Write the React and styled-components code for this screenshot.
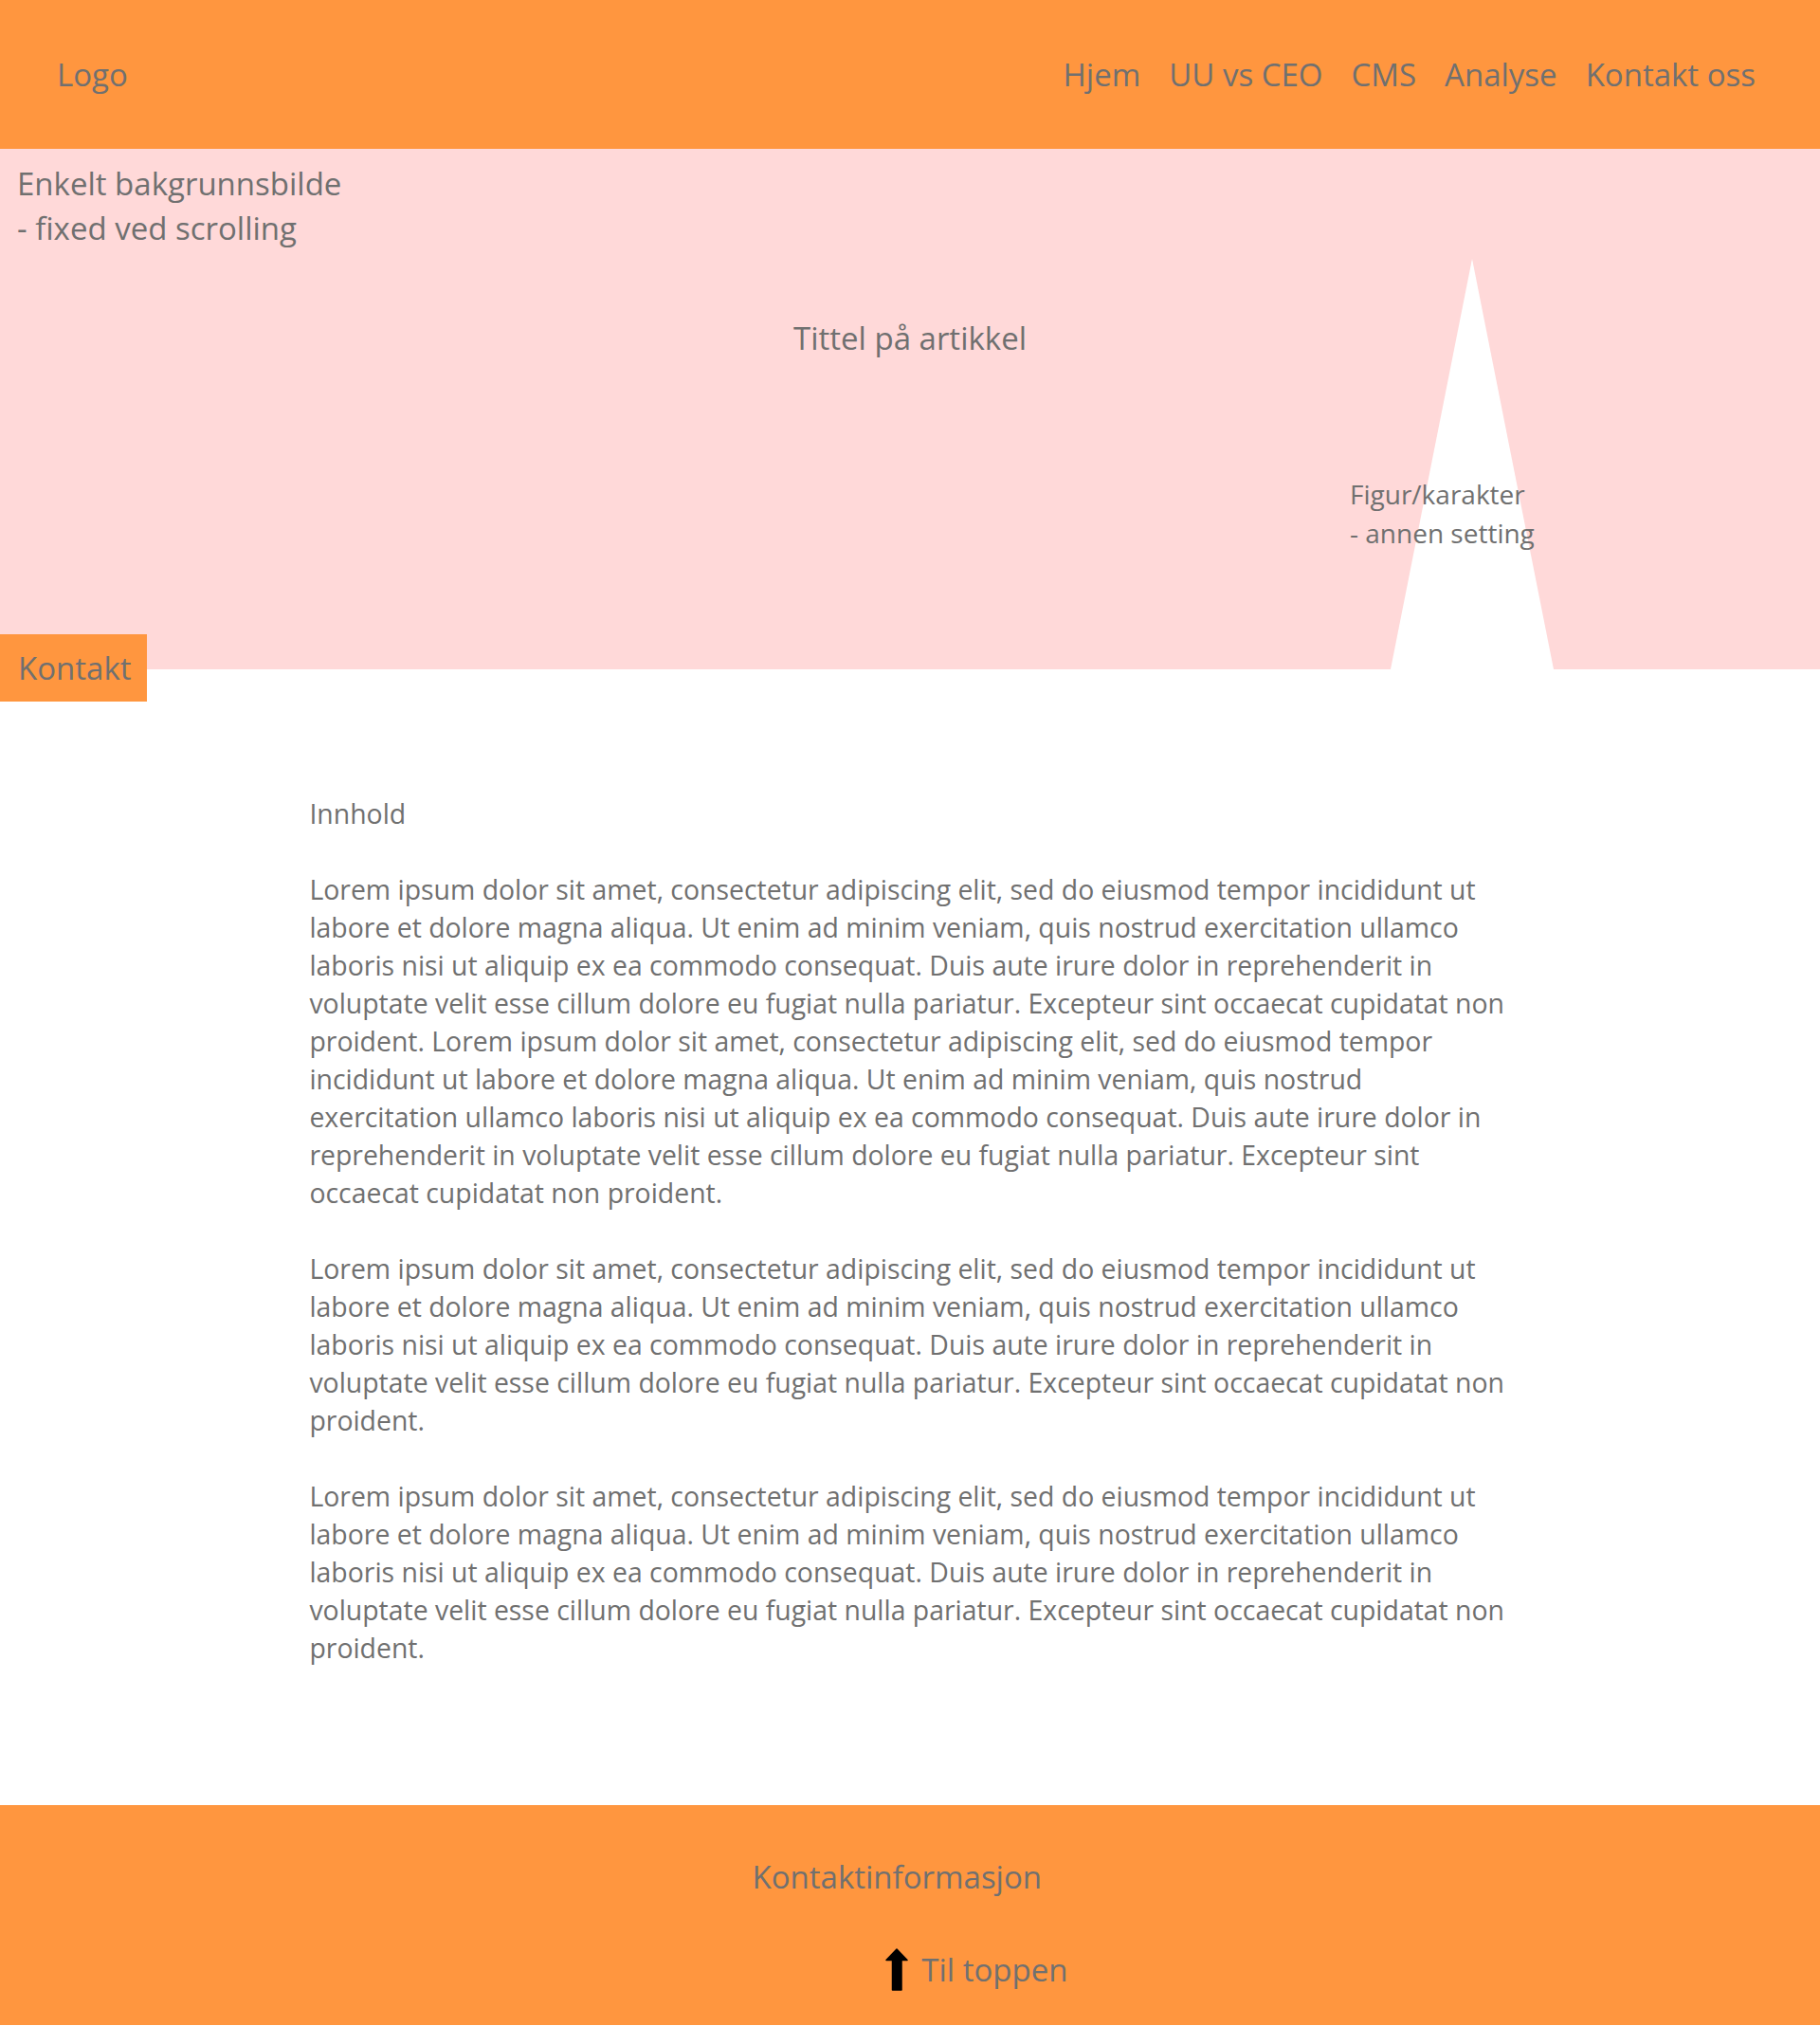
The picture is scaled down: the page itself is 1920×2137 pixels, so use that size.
import React from 'react';
import styled, { createGlobalStyle } from 'styled-components';

const orange = '#ff963f';
const pink = '#ffd9d9';
const grey = '#707070';

const GlobalStyle = createGlobalStyle`
  body {
    margin: 0;
    font-family: "Segoe UI", "Open Sans", "Noto Sans", sans-serif;
    color: ${grey};
    background: #fff;
  }
`;

const Header = styled.header`
  display: flex;
  justify-content: space-between;
  align-items: center;
  height: 157px;
  padding: 0 68px 0 60px;
  box-sizing: border-box;
  background: ${orange};
  font-size: 33px;
`;

const Logo = styled.div``;

const Nav = styled.nav`
  display: flex;
  gap: 30px;
`;

const NavLink = styled.a`
  color: ${grey};
  text-decoration: none;
`;

const Hero = styled.section`
  position: relative;
  height: 549px;
  padding: 13px 18px 0;
  box-sizing: border-box;
  background: ${pink};
  font-size: 33px;
  line-height: 47px;
`;

const Note = styled.div``;

const Title = styled.h1`
  margin: 69px 0 0;
  font-size: 33px;
  font-weight: normal;
  text-align: center;
`;

// the triangle stands for the character figure on the background
const Figure = styled.div`
  position: absolute;
  left: 1467px;
  top: 116px;
  width: 172px;
  bottom: 0;
  background: #fff;
  clip-path: polygon(50% 0, 100% 100%, 0 100%);
`;

const FigureLabel = styled.div`
  position: absolute;
  left: 1424px;
  top: 344px;
  font-size: 28px;
  line-height: 41px;
`;

const ContactTab = styled.a`
  position: absolute;
  left: 0;
  top: 512px;
  width: 155px;
  height: 71px;
  display: flex;
  align-items: center;
  padding-left: 19px;
  box-sizing: border-box;
  background: ${orange};
  color: ${grey};
  text-decoration: none;
  font-size: 33px;
  z-index: 2;
`;

const Main = styled.main`
  width: 66%;
  margin: 0 auto;
  padding: 132px 0 146px;
  font-size: 28.4px;
  line-height: 40px;
`;

const Paragraph = styled.p`
  margin: 0 0 40px;

  &:last-child {
    margin-bottom: 0;
  }
`;

const Footer = styled.footer`
  display: flex;
  justify-content: center;
  height: 232px;
  padding-top: 52px;
  box-sizing: border-box;
  background: ${orange};
  font-size: 33px;
  line-height: 47px;
`;

const FooterInner = styled.div`
  display: flex;
  flex-direction: column;
  width: 333px;
  gap: 51px;
`;

const ToTop = styled.a`
  display: flex;
  align-items: center;
  align-self: flex-end;
  gap: 14px;
  color: ${grey};
  text-decoration: none;
`;

const ArrowUp = () => (
  <svg width="24" height="46" viewBox="0 0 24 46">
    <path
      d="M12 1 L23 12.5 L17 12.5 L17 44 L7.5 44 L7.5 12.5 L1 12.5 Z"
      fill="#000"
      stroke="#000"
      strokeWidth="1.5"
      strokeLinejoin="round"
    />
  </svg>
);

const lorem =
  'Lorem ipsum dolor sit amet, consectetur adipiscing elit, sed do eiusmod tempor incididunt ut labore et dolore magna aliqua. Ut enim ad minim veniam, quis nostrud exercitation ullamco laboris nisi ut aliquip ex ea commodo consequat. Duis aute irure dolor in reprehenderit in voluptate velit esse cillum dolore eu fugiat nulla pariatur. Excepteur sint occaecat cupidatat non proident.';

const navItems = ['Hjem', 'UU vs CEO', 'CMS', 'Analyse', 'Kontakt oss'];

export default function App() {
  return (
    <>
      <GlobalStyle />
      <Header>
        <Logo>Logo</Logo>
        <Nav>
          {navItems.map((item) => (
            <NavLink key={item} href="#">
              {item}
            </NavLink>
          ))}
        </Nav>
      </Header>

      <Hero>
        <Note>
          Enkelt bakgrunnsbilde
          <br />- fixed ved scrolling
        </Note>
        <Title>Tittel på artikkel</Title>
        <Figure />
        <FigureLabel>
          Figur/karakter
          <br />- annen setting
        </FigureLabel>
        <ContactTab href="#">Kontakt</ContactTab>
      </Hero>

      <Main>
        <Paragraph>Innhold</Paragraph>
        <Paragraph>{`${lorem} ${lorem}`}</Paragraph>
        <Paragraph>{lorem}</Paragraph>
        <Paragraph>{lorem}</Paragraph>
      </Main>

      <Footer>
        <FooterInner>
          <div>Kontaktinformasjon</div>
          <ToTop href="#">
            <ArrowUp />
            Til toppen
          </ToTop>
        </FooterInner>
      </Footer>
    </>
  );
}
